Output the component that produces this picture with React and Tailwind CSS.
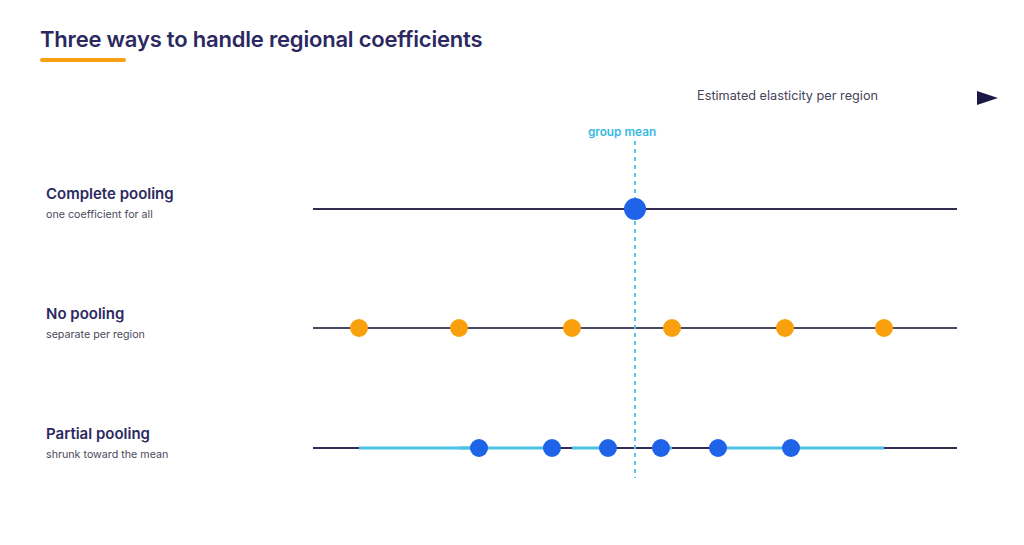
import React from "react";

const orange = [359, 459, 572, 672, 785, 884];
const blue = [479, 552, 608, 661, 718, 791];

function Label({ title, sub }) {
  return (
    <div className="flex flex-col">
      <div className="text-[15px] leading-[20px] font-semibold text-[#2b2960]">{title}</div>
      <div className="mt-[3px] text-[10.7px] leading-[16px] text-[#4b4a5c]">{sub}</div>
    </div>
  );
}

export default function App() {
  return (
    <div
      className="w-[1024px] h-[545px] bg-white overflow-hidden flex flex-col"
      style={{ fontFamily: "Inter, 'Noto Sans', sans-serif" }}
    >
      <div className="pl-10 pt-[25px]">
        <h1 className="text-[22px] leading-[28px] font-semibold text-[#2b2960] tracking-[-0.2px]">
          Three ways to handle regional coefficients
        </h1>
        <div className="mt-[5px] w-[86px] h-[4px] rounded-full bg-[#f6a112]" />
      </div>

      <div className="mt-[25px] h-[18px] flex items-center justify-end gap-[99px] pr-[26px]">
        <span className="text-[12.7px] leading-[18px] text-[#45445a]">Estimated elasticity per region</span>
        <svg width="21" height="14" viewBox="0 0 21 14" className="mt-[4px]">
          <polygon points="0,0 21,7 0,14" fill="#1b1846" />
        </svg>
      </div>

      <div className="mt-[15px] flex">
        <div className="w-[313px] pl-[46px] pt-[64px] flex flex-col gap-[81px]">
          <Label title="Complete pooling" sub="one coefficient for all" />
          <Label title="No pooling" sub="separate per region" />
          <Label title="Partial pooling" sub="shrunk toward the mean" />
        </div>
        <svg width="711" height="380" viewBox="313 120 711 380">
          <line x1="313" y1="209" x2="957" y2="209" stroke="#2f2d52" strokeWidth="2" />
          <line x1="313" y1="328" x2="957" y2="328" stroke="#4a4862" strokeWidth="2" />
          <line x1="313" y1="448" x2="957" y2="448" stroke="#2f2d52" strokeWidth="2" />
          {orange.map((o, i) => (
            <line key={i} x1={o} y1="448" x2={blue[i]} y2="448" stroke="#4cc1e6" strokeWidth="3" />
          ))}
          <text
            x="622"
            y="136"
            textAnchor="middle"
            fontSize="11.8"
            fontWeight="600"
            fill="#38b9e3"
            style={{ fontFamily: "Inter, 'Noto Sans', sans-serif" }}
          >
            group mean
          </text>
          <line x1="635" y1="141" x2="635" y2="478" stroke="#5cc6ea" strokeWidth="2" strokeDasharray="4 4" />
          <circle cx="635" cy="209" r="11" fill="#1f63e8" />
          {orange.map((x, i) => (
            <circle key={i} cx={x} cy="328" r="9" fill="#f9a10c" />
          ))}
          {blue.map((x, i) => (
            <circle key={i} cx={x} cy="448" r="9" fill="#1f63e8" />
          ))}
        </svg>
      </div>
    </div>
  );
}
